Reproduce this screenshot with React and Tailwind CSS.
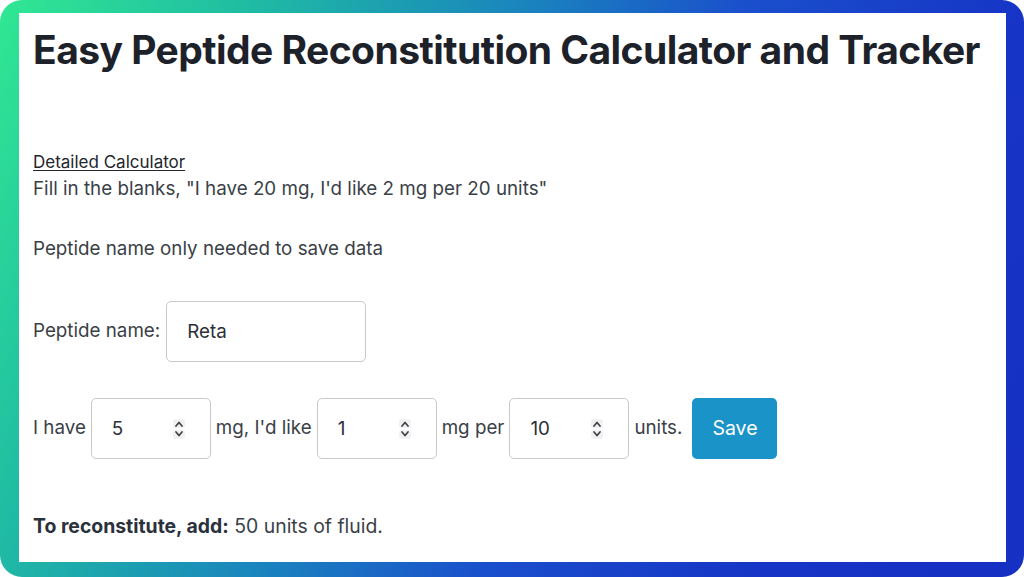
import { useState } from 'react';

function Stepper() {
  return (
    <svg width="14" height="22" viewBox="0 0 14 22" aria-hidden="true">
      <rect x="1" y="1" width="12" height="9" rx="3" fill="#f1f1f1" />
      <rect x="1" y="12" width="12" height="9" rx="3" fill="#f1f1f1" />
      <path d="M4 8 L7 4.5 L10 8" fill="none" stroke="#3d4148" strokeWidth="1.7" strokeLinecap="round" strokeLinejoin="round" />
      <path d="M4 14 L7 17.5 L10 14" fill="none" stroke="#3d4148" strokeWidth="1.7" strokeLinecap="round" strokeLinejoin="round" />
    </svg>
  );
}

function NumberBox({ value, onChange }) {
  return (
    <div className="relative h-[61px] w-[120px] rounded-[5px] border border-[#c9c9c9] bg-white">
      <input
        type="text"
        inputMode="numeric"
        value={value}
        onChange={(e) => onChange(e.target.value)}
        className="h-full w-full rounded-[5px] bg-transparent pl-[20px] pr-8 text-[18.8px] text-[#2b3038] outline-none"
      />
      <span className="pointer-events-none absolute right-[24px] top-1/2 flex -translate-y-1/2">
        <Stepper />
      </span>
    </div>
  );
}

export default function App() {
  const [name, setName] = useState('Reta');
  const [mg, setMg] = useState('5');
  const [dose, setDose] = useState('1');
  const [units, setUnits] = useState('10');

  const fluid = Number(dose) > 0 ? Math.round((Number(mg) / Number(dose)) * Number(units)) : 0;

  return (
    <div className="h-[577px] w-[1024px] overflow-hidden bg-white">
      <div className="h-[577px] w-[1024px] rounded-[22px] bg-[linear-gradient(115deg,#30e892_0%,#1fbaa4_20%,#1a86bd_40%,#1a4fcc_58%,#1634c6_80%,#1530c2_100%)] pl-[19px] pr-[18px] pt-[13px] pb-[15px]">
        <div className="h-[549px] bg-white px-[14px] pt-[17px] font-['Inter',sans-serif] text-[#3a3f47]">
          <h1 className="whitespace-nowrap text-[39px] font-bold leading-[40px] tracking-[-0.55px] text-[#1d222a]">
            Easy Peptide Reconstitution Calculator and Tracker
          </h1>

          <p className="mt-[82px] text-[17px] leading-[20px] text-[#22262c] underline underline-offset-2">Detailed Calculator</p>
          <p className="mt-[5px] text-[18.8px] leading-[24px]">Fill in the blanks, "I have 20 mg, I'd like 2 mg per 20 units"</p>

          <p className="mt-[36px] text-[18.8px] leading-[24px]">Peptide name only needed to save data</p>

          <div className="mt-[40px] flex items-center gap-[6px]">
            <span className="text-[18.8px]">Peptide name:</span>
            <input
              type="text"
              value={name}
              onChange={(e) => setName(e.target.value)}
              className="h-[61px] w-[200px] rounded-[5px] border border-[#c9c9c9] bg-white pl-[20px] text-[18.8px] text-[#2b3038] outline-none"
            />
          </div>

          <div className="mt-[36px] flex items-center gap-[5px]">
            <span className="text-[18.8px]">I have</span>
            <NumberBox value={mg} onChange={setMg} />
            <span className="text-[18.8px]">mg, I'd like</span>
            <NumberBox value={dose} onChange={setDose} />
            <span className="text-[18.8px]">mg per</span>
            <NumberBox value={units} onChange={setUnits} />
            <span className="text-[18.8px]">units.</span>
            <button type="button" className="ml-[5px] h-[61px] w-[85px] rounded-[5px] bg-[#1a93c8] text-[19.5px] text-white">
              Save
            </button>
          </div>

          <p className="mt-[55px] text-[19.4px] leading-[24px]">
            <span className="font-bold text-[#2b313b]">To reconstitute, add:</span> {fluid} units of fluid.
          </p>
        </div>
      </div>
    </div>
  );
}
